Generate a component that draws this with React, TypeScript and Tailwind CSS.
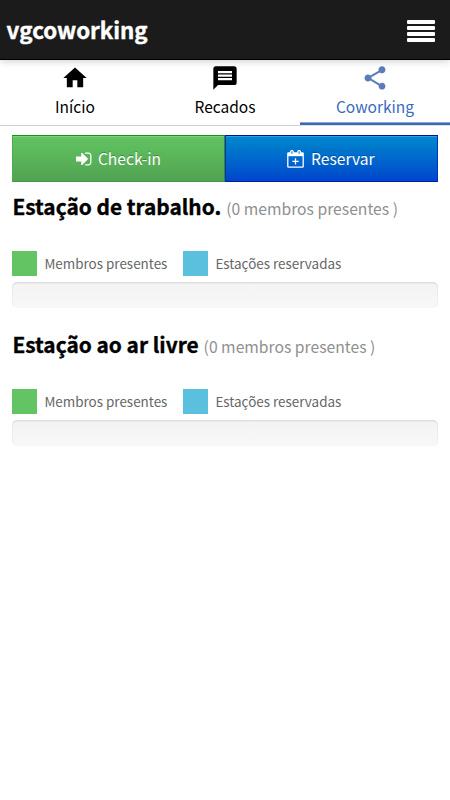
import React from "react";
import { MdHome, MdMessage, MdShare } from "react-icons/md";

function SignInIcon() {
  return (
    <svg viewBox="0 0 1536 1792" className="h-[18px] w-[15.5px]" fill="currentColor">
      <path d="M1184 896q0 26-19 45l-544 544q-19 19-45 19t-45-19-19-45v-288h-448q-26 0-45-19t-19-45v-384q0-26 19-45t45-19h448v-288q0-26 19-45t45-19 45 19l544 544q19 19 19 45zm352-352v704q0 119-84.5 203.5t-203.5 84.5h-320q-13 0-22.5-9.5t-9.5-22.5q0-4-1-20t-.5-26.5 3-23.5 10-19.5 20.5-6.5h320q66 0 113-47t47-113v-704q0-66-47-113t-113-47h-312l-11.5-1-11.5-3-8-5.5-7-9-2-13.5q0-4-1-20t-.5-26.5 3-23.5 10-19.5 20.5-6.5h320q119 0 203.5 84.5t84.5 203.5z" />
    </svg>
  );
}

function CalendarPlusIcon() {
  return (
    <svg viewBox="0 0 17 18" className="h-[18px] w-[17px]" fill="none" stroke="currentColor" strokeWidth="1.3">
      <rect x="0.8" y="2.8" width="15.4" height="14.4" rx="0.8" />
      <path d="M1 3h15v3.2H1z" fill="currentColor" stroke="none" />
      <rect x="3.7" y="0.7" width="2.4" height="3.8" rx="0.9" className="fill-[#0078ce]" />
      <rect x="10.9" y="0.7" width="2.4" height="3.8" rx="0.9" className="fill-[#0078ce]" />
      <path d="M8.5 8.2v6.4M5.3 11.4h6.4" />
    </svg>
  );
}

function Station({ name, className }: { name: string; className: string }) {
  return (
    <section className={className}>
      <h2 className="flex h-[30px] items-baseline gap-[5px] whitespace-nowrap leading-[30px]">
        <span className="text-[20.85px] font-bold text-black [-webkit-text-stroke:0.35px_black]">{name}</span>
        <span className="text-[15.7px] text-[#8f8f8f]">(0 membros presentes )</span>
      </h2>
      <div className="mt-[30px] flex h-[25px] items-center text-[13.45px] text-[#666]">
        <i className="h-[25px] w-[25px] bg-[#62c462]" />
        <span className="ml-[7px] w-[139px] whitespace-nowrap leading-[25px]">Membros presentes</span>
        <i className="h-[25px] w-[25px] bg-[#5bc0de]" />
        <span className="ml-[7px] whitespace-nowrap leading-[25px]">Estações reservadas</span>
      </div>
      <div className="mt-[6px] h-[26px] rounded-[5px] bg-linear-to-b from-[#f3f3f3] to-[#f8f8f8] shadow-[inset_0_1px_2px_rgba(0,0,0,0.12)]" />
    </section>
  );
}

export default function App() {
  return (
    <div className="h-[800px] w-[450px] overflow-hidden bg-white font-['Noto_Sans_CJK_SC',sans-serif]">
      <header className="relative flex h-[60px] items-center justify-between border-b border-black bg-[#1b1b1b] pl-[6.5px] pr-[15px] shadow-[0_1px_8px_rgba(0,0,0,0.2)]">
        <h1 className="mb-[2px] text-[22.3px] font-bold leading-[30px] text-white [-webkit-text-stroke:0.4px_white]">vgcoworking</h1>
        <div className="mt-[3px] flex w-[28px] flex-col gap-[2px]">
          <i className="h-[4px] rounded-[1px] bg-white" />
          <i className="h-[4px] rounded-[1px] bg-white" />
          <i className="h-[4px] rounded-[1px] bg-white" />
          <i className="h-[4px] rounded-[1px] bg-white" />
        </div>
      </header>
      <nav className="grid h-[66px] grid-cols-3 text-[15.5px] leading-[24px] text-black">
        <a className="flex flex-col items-center border-b border-[#d0d0d0] pt-[4px]">
          <MdHome className="h-[28px] w-[28px]" />
          <span className="mt-[2px]">Início</span>
        </a>
        <a className="flex flex-col items-center border-b border-[#d0d0d0] pt-[4px]">
          <MdMessage className="h-[28px] w-[28px]" />
          <span className="mt-[2px]">Recados</span>
        </a>
        <a className="flex flex-col items-center border-b border-[#e2e2de] pt-[4px] text-[#3a6bbf] shadow-[inset_0_-2px_0_#3a68b9,inset_0_-3px_0_#8aa6d6]">
          <MdShare className="h-[28px] w-[28px] text-[#5a7cbb]" />
          <span className="mt-[2px]">Coworking</span>
        </a>
      </nav>
      <main className="px-[12.4px] pt-[9px]">
        <div className="grid h-[47px] grid-cols-2 text-[15.6px] leading-[24px] text-white">
          <button className="flex items-center justify-center gap-[6px] border border-t-[#119611] border-r-[#318a31] border-b-[#4b964b] border-l-[#4bad4b] bg-linear-to-b from-[#62c462] to-[#51a351] shadow-[inset_0_1px_0_rgba(255,255,255,0.2)] [text-shadow:0_-1px_0_rgba(0,0,0,0.25)]">
            <SignInIcon />
            <span className="mb-[1px]">Check-in</span>
          </button>
          <button className="flex items-center justify-center gap-[7px] border border-t-[#0010a8] border-r-[#0035bb] border-b-[#0020a0] border-l-[#0035bb] bg-linear-to-b from-[#0088cc] to-[#0044cc] pr-[1px] shadow-[inset_0_1px_0_rgba(255,255,255,0.2)] [text-shadow:0_-1px_0_rgba(0,0,0,0.25)]">
            <CalendarPlusIcon />
            <span className="mb-[1px]">Reservar</span>
          </button>
        </div>
        <Station name="Estação de trabalho." className="mt-[9px]" />
        <Station name="Estação ao ar livre" className="mt-[21px]" />
      </main>
    </div>
  );
}
